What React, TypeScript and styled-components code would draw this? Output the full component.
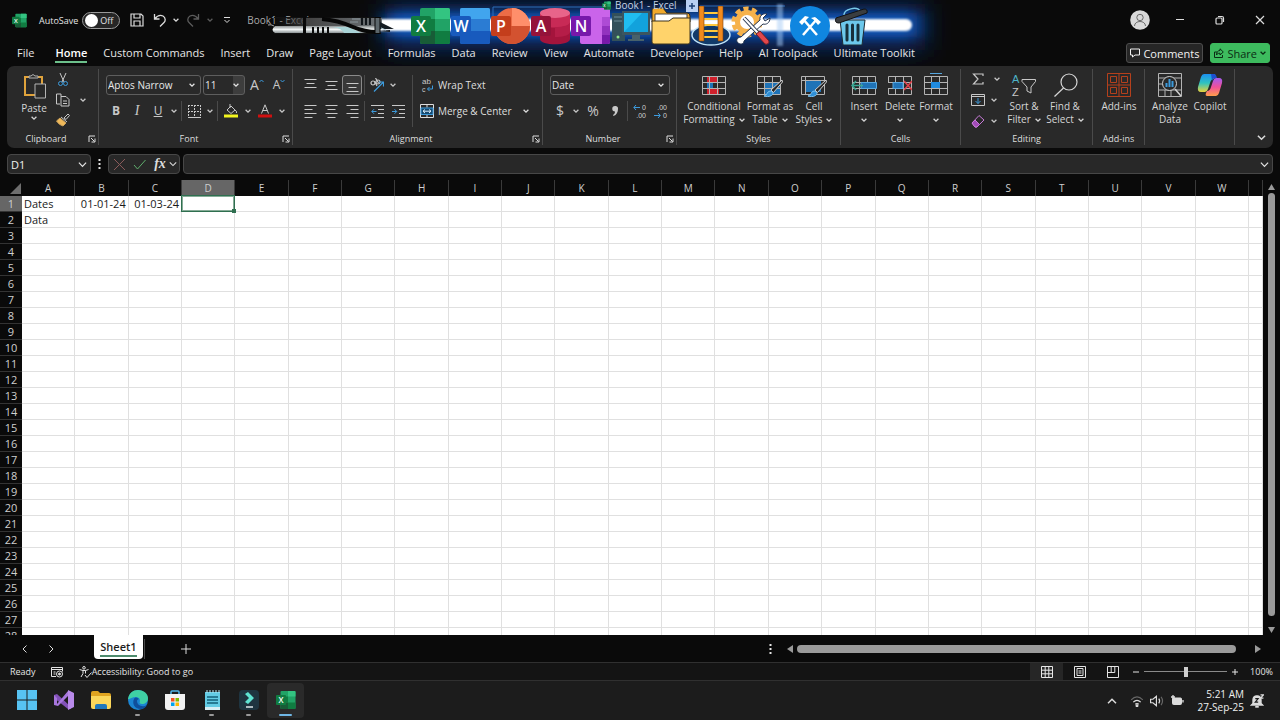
import React from "react";
import styled, { createGlobalStyle, css } from "styled-components";

const Global = createGlobalStyle`
  * { box-sizing: border-box; }
  body {
    margin: 0;
    background: #0a0a0a;
    color: #e4e4e4;
    font-family: "Open Sans", "Noto Sans", sans-serif;
    font-size: 10px;
    overflow: hidden;
  }
  button, input, select { font: inherit; color: inherit; margin: 0; padding: 0; border: 0; background: none; outline: none; }
  svg { display: block; flex: none; }
`;

const Page = styled.div`
  display: flex;
  flex-direction: column;
  height: 100vh;
  position: relative;
`;

/* ---------- title bar ---------- */
const TitleBar = styled.header`
  display: flex;
  align-items: center;
  flex: none;
  height: 40px;
  padding-left: 12px;
`;
const AutoSave = styled.label`
  display: flex;
  align-items: center;
  gap: 4px;
  margin-left: 12px;
  font-size: 9px;
`;
const Switch = styled.span`
  display: grid;
  grid-template-columns: 15px 1fr;
  align-items: center;
  width: 38px;
  height: 17px;
  padding: 0 2px;
  border: 1px solid #9a9a9a;
  border-radius: 9px;
  background: #262626;
  input {
    appearance: none;
    width: 13px;
    height: 13px;
    border-radius: 50%;
    background: #fff;
  }
`;
const IconButton = styled.button<{ $w?: number; $dim?: boolean }>`
  display: flex;
  align-items: center;
  justify-content: center;
  flex: none;
  width: ${(p) => p.$w ?? 20}px;
  height: 20px;
  color: ${(p) => (p.$dim ? "#5c5c5c" : "#dcdcdc")};
`;
const QuickAccess = styled.div`
  display: flex;
  align-items: center;
  margin-left: 6px;
`;
const DocTitle = styled.span`
  margin-left: 8px;
  font-size: 10px;
  color: #a9a9a9;
`;
const WindowControls = styled.div`
  display: flex;
  align-items: center;
  margin-left: auto;
`;

/* ---------- dock floating over the window ---------- */
const Dock = styled.div`
  position: absolute;
  left: 260px;
  top: 0;
  width: 704px;
  height: 66px;
`;
const DockArt = styled.svg`
  position: absolute;
  left: 0;
  top: 0;
`;
const DockItems = styled.div`
  position: relative;
  display: flex;
  align-items: center;
  height: 52px;
  padding-left: 151px;
`;
const DockGap = styled.span`
  width: 19px;
`;
const DockHint = styled.div`
  position: absolute;
  left: 342px;
  top: 0;
  display: flex;
  align-items: center;
  gap: 4px;
  height: 11px;
  font-size: 10px;
  line-height: 11px;
  color: #c4d2e6;
`;
const HintPlus = styled.button`
  width: 12px;
  height: 12px;
  margin-left: 5px;
  display: grid;
  place-items: center;
  background: #b9d0f3;
  color: #1d3f74;
`;

/* ---------- tab strip ---------- */
const TabRow = styled.nav`
  position: relative;
  display: flex;
  align-items: center;
  flex: none;
  gap: 16px;
  height: 26px;
  padding: 0 10px 0 17px;
`;
const Tab = styled.button<{ $active?: boolean }>`
  height: 20px;
  padding-top: 2px;
  font-size: 11px;
  line-height: 16px;
  white-space: nowrap;
  color: ${(p) => (p.$active ? "#fff" : "#e6e6e6")};
  font-weight: ${(p) => (p.$active ? 600 : 400)};
  border-bottom: 2px solid ${(p) => (p.$active ? "#6cc08b" : "transparent")};
  &:first-child { margin-right: 5px; }
`;
const TabActions = styled.div`
  display: flex;
  gap: 7px;
  margin-left: auto;
`;
const ActionButton = styled.button<{ $primary?: boolean }>`
  display: flex;
  align-items: center;
  gap: 3px;
  height: 20px;
  padding: 0 3px;
  border-radius: 3px;
  font-size: 11px;
  white-space: nowrap;
  border: 1px solid ${(p) => (p.$primary ? "#3dbb5e" : "#4d4d4d")};
  background: ${(p) => (p.$primary ? "#3dbb5e" : "#262626")};
  color: ${(p) => (p.$primary ? "#0b2c14" : "#f2f2f2")};
`;

/* ---------- ribbon ---------- */
const Ribbon = styled.section`
  display: flex;
  height: 82px;
  flex: none;
  margin: 0 7px;
  border-radius: 7px;
  background: #292929;
`;
const Group = styled.div<{ $w: number; $pad?: number }>`
  display: flex;
  flex-direction: column;
  flex: none;
  width: ${(p) => p.$w}px;
  margin: 3px 0;
  padding-left: ${(p) => p.$pad ?? 7}px;
  border-right: 1px solid #4a4a4a;
`;
const GroupBody = styled.div`
  display: flex;
  flex: 1;
`;
const GroupFoot = styled.div<{ $pad?: number }>`
  display: flex;
  align-items: center;
  height: 12px;
  margin-left: -${(p) => p.$pad ?? 7}px;
  font-size: 9px;
  line-height: 12px;
  color: #dedede;
  span { flex: 1; text-align: center; }
  button { display: grid; place-items: center; width: 13px; }
`;
const Stack = styled.div<{ $gap?: number; $top?: number; $grow?: boolean }>`
  display: flex;
  flex-direction: column;
  gap: ${(p) => p.$gap ?? 6}px;
  padding-top: ${(p) => p.$top ?? 6}px;
  ${(p) => p.$grow && "flex: 1;"}
`;
const Row = styled.div<{ $gap?: number }>`
  display: flex;
  align-items: center;
  gap: ${(p) => p.$gap ?? 1}px;
`;
const Tool = styled.button<{ $w?: number; $on?: boolean; $h?: number }>`
  display: flex;
  align-items: center;
  justify-content: center;
  flex: none;
  width: ${(p) => p.$w ?? 20}px;
  height: ${(p) => p.$h ?? 20}px;
  color: #c8c8c8;
  border-radius: 3px;
  ${(p) =>
    p.$on &&
    css`
      border: 1px solid #8a8a8a;
      background: #383838;
    `}
`;
const Glyph = styled.span<{ $bold?: boolean; $italic?: boolean; $line?: boolean; $size?: number }>`
  font-size: ${(p) => p.$size ?? 12}px;
  line-height: 16px;
  font-weight: ${(p) => (p.$bold ? 700 : 400)};
  font-style: ${(p) => (p.$italic ? "italic" : "normal")};
  font-family: ${(p) => (p.$italic ? '"Liberation Serif", serif' : "inherit")};
  text-decoration: ${(p) => (p.$line ? "underline" : "none")};
`;
const Rule = styled.span`
  flex: none;
  width: 1px;
  height: 20px;
  margin: 0 1px;
  background: #4a4a4a;
`;
const TallRule = styled.span`
  width: 1px;
  height: 52px;
  margin: 6px 7px 0 4px;
  background: #4a4a4a;
`;
const SelectBox = styled.div<{ $w: number; $shade?: boolean }>`
  display: grid;
  grid-template-columns: 1fr 11px;
  align-items: center;
  width: ${(p) => p.$w}px;
  height: 20px;
  border: 1px solid #5e5e5e;
  border-radius: 3px;
  background: ${(p) =>
    p.$shade ? "linear-gradient(to left, #3d3d3d 11px, #292929 11px)" : "#292929"};
  select {
    grid-area: 1 / 1 / 2 / 3;
    appearance: none;
    width: 100%;
    padding-left: 1px;
    font-size: 10px;
    line-height: 16px;
    color: #e8e8e8;
  }
  svg { grid-area: 1 / 2; pointer-events: none; }
`;
const WideTool = styled.button`
  display: flex;
  align-items: center;
  gap: 4px;
  width: 100%;
  height: 20px;
  padding-right: 13px;
  font-size: 10px;
  white-space: nowrap;
  color: #dedede;
  svg:last-child:not(:first-child) { margin-left: auto; }
`;
const Big = styled.button<{ $w: number }>`
  display: flex;
  flex-direction: column;
  align-items: center;
  flex: none;
  width: ${(p) => p.$w}px;
  padding-top: 4px;
  font-size: 10px;
  line-height: 13px;
  white-space: nowrap;
  color: #d6d6d6;
  span { display: flex; align-items: center; gap: 4px; min-height: 13px; }
  svg + span { margin-top: 3px; }
`;
const RibbonEnd = styled.div`
  display: flex;
  flex: 1;
  align-items: flex-end;
  justify-content: flex-end;
  padding: 0 2px 1px 0;
`;

/* ---------- formula bar ---------- */
const FormulaRow = styled.div`
  display: flex;
  align-items: center;
  flex: none;
  height: 32px;
  padding: 0 7px;
`;
const Field = styled.div<{ $w?: number }>`
  display: flex;
  align-items: center;
  height: 20px;
  ${(p) => (p.$w ? `width: ${p.$w}px;` : "flex: 1; margin-left: 3px;")}
  padding: 0 3px;
  border: 1px solid #474747;
  border-radius: 4px;
  background: #282828;
  input { flex: 1; min-width: 0; font-size: 11px; color: #f0f0f0; }
`;
const Grip = styled.span`
  width: 17px;
  display: flex;
  justify-content: center;
`;

/* ---------- grid ---------- */
const SheetArea = styled.main`
  display: flex;
  flex: 1;
  min-height: 0;
`;
const SheetClip = styled.div`
  flex: 1;
  overflow: hidden;
`;
const Sheet = styled.table`
  table-layout: fixed;
  width: 100%;
  border-collapse: separate;
  border-spacing: 0;
`;
const ColW = styled.col<{ $w: number }>`
  width: ${(p) => p.$w}px;
`;
const ColHead = styled.th<{ $on?: boolean }>`
  height: 16px;
  padding: 0;
  font-size: 10px;
  line-height: 14px;
  font-weight: 400;
  border-right: 1px solid #3a3a3a;
  color: #d0d0d0;
  background: ${(p) => (p.$on ? "#666" : "#0a0a0a")};
`;
const RowHead = styled.th<{ $on?: boolean }>`
  height: 16px;
  padding: 0;
  font-size: 11px;
  line-height: 15px;
  font-weight: 400;
  border-bottom: 1px solid #333;
  color: #d0d0d0;
  background: ${(p) => (p.$on ? "#666" : "#0a0a0a")};
`;
const Corner = styled.th`
  padding: 0;
  svg { margin-left: 9px; }
`;
const Cell = styled.td<{ $right?: boolean; $sel?: boolean }>`
  position: relative;
  height: 16px;
  padding: 0 2px;
  font-size: 11px;
  line-height: 15px;
  color: #1a1a1a;
  background: #fff;
  white-space: nowrap;
  text-align: ${(p) => (p.$right ? "right" : "left")};
  border-right: 1px solid #e0e0e0;
  border-bottom: 1px solid #e0e0e0;
  ${(p) =>
    p.$sel &&
    css`
      z-index: 1;
      &::before {
        content: "";
        position: absolute;
        inset: -1px;
        border: 1px solid #2f6f50;
        outline: 1px solid #86ab97;
        outline-offset: -2px;
      }
      &::after {
        content: "";
        position: absolute;
        right: -2px;
        bottom: -2px;
        width: 4px;
        height: 4px;
        background: #2f6f50;
      }
    `}
`;
const VScroll = styled.div`
  display: flex;
  flex-direction: column;
  align-items: center;
  justify-content: space-between;
  width: 17px;
  padding: 4px 0 1px;
`;
const VThumb = styled.div`
  flex: 1;
  width: 7px;
  margin: 2px 0 11px;
  border-radius: 4px;
  background: #9a9a9a;
`;

/* ---------- sheet tabs ---------- */
const SheetBar = styled.div`
  display: flex;
  align-items: center;
  flex: none;
  height: 27px;
  padding: 0 19px 0 14px;
`;
const SheetTab = styled.button`
  align-self: flex-start;
  height: 24px;
  width: 49px;
  margin-left: 26px;
  border-radius: 0 0 4px 4px;
  background: #fff;
  color: #1c1c1c;
  font-size: 11px;
  font-weight: 600;
  line-height: 17px;
  span { display: inline-block; border-bottom: 2px solid #4c8a6c; height: 19px; }
`;
const BarFill = styled.div`
  flex: 1;
`;
const HScroll = styled.div`
  display: flex;
  align-items: center;
  gap: 4px;
  width: 38%;
  margin-left: 15px;
`;
const HThumb = styled.div`
  flex: 1;
  height: 8px;
  margin-right: 15px;
  border-radius: 4px;
  background: #9a9a9a;
`;

/* ---------- status bar ---------- */
const StatusBar = styled.footer`
  display: flex;
  align-items: center;
  flex: none;
  height: 19px;
  padding: 0 7px 0 10px;
  font-size: 9px;
  background: #141414;
  border-top: 1px solid #303030;
  border-bottom: 1px solid #303030;
`;
const StatusItem = styled.button`
  display: flex;
  align-items: center;
  margin-left: 15px;
`;
const Views = styled.div`
  display: flex;
  margin-left: auto;
`;
const ViewButton = styled.button<{ $on?: boolean }>`
  display: grid;
  place-items: center;
  width: 33px;
  height: 17px;
  background: ${(p) => (p.$on ? "#262626" : "none")};
`;
const Zoom = styled.label`
  display: flex;
  align-items: center;
  gap: 5px;
  margin-left: 4px;
  input {
    appearance: none;
    width: 83px;
    height: 10px;
    background: linear-gradient(#8a8a8a, #8a8a8a) center / 100% 1px no-repeat;
  }
  input::-webkit-slider-thumb {
    appearance: none;
    width: 4px;
    height: 10px;
    background: #cfcfcf;
  }
  span { margin-left: 7px; }
`;

/* ---------- taskbar ---------- */
const Taskbar = styled.nav`
  display: flex;
  align-items: center;
  flex: none;
  height: 39px;
  padding: 0 16px 0 8px;
  background: #1c1c1c;
`;
const TaskButton = styled.button<{ $mark?: "idle" | "active" }>`
  display: flex;
  flex-direction: column;
  align-items: center;
  width: 37px;
  height: 35px;
  padding-top: 7px;
  border-radius: 4px;
  background: ${(p) => (p.$mark === "active" ? "#2a2a2a" : "none")};
  &::after {
    content: "";
    width: ${(p) => (p.$mark === "active" ? 13 : 5)}px;
    height: 2px;
    margin-top: 4px;
    border-radius: 1px;
    background: ${(p) => (p.$mark === "active" ? "#6fb7e6" : p.$mark ? "#999" : "transparent")};
  }
`;
const Tray = styled.div`
  display: flex;
  align-items: center;
  margin-left: auto;
`;
const Clock = styled.time`
  margin: 0 6px 0 9px;
  text-align: right;
  font-size: 10px;
  line-height: 13px;
  color: #f0f0f0;
`;

/* ---------- icons ---------- */
const Chev = ({ s = 6, up = false, w = 1.3 }: { s?: number; up?: boolean; w?: number }) => (
  <svg width={s} height={s} viewBox="0 0 6 6" fill="none" stroke="currentColor" strokeWidth={w}>
    <path d={up ? "M.6 4.4 3 2l2.4 2.4" : "M.6 1.8 3 4.2l2.4-2.4"} />
  </svg>
);
type IcoProps = { s?: number; h?: number; w?: number; box?: string; children: React.ReactNode };
const Ico = ({ s = 16, h, w = 1, box, children }: IcoProps) => (
  <svg width={s} height={h ?? s} viewBox={box ?? `0 0 ${s} ${h ?? s}`} fill="none" stroke="currentColor" strokeWidth={w}>
    {children}
  </svg>
);
const Launcher = () => (
  <button aria-label="More settings">
    <Ico s={8}>
      <path d="M1 7V1h6M3 3l3.500 3.500M7 3.500V7H3.500" />
    </Ico>
  </button>
);
const MarkText = styled.text`
  font-family: "Liberation Sans", sans-serif;
`;
const ExcelLogo = ({ s }: { s: number }) => (
  <svg width={s} height={s} viewBox="0 0 40 40">
    <rect x="9" y="2" width="30" height="36" rx="2" fill="#21a366" />
    <path d="M24 2h13a2 2 0 0 1 2 2v9H24z" fill="#33c481" />
    <path d="M9 13h15v12H9zM24 25h15v11a2 2 0 0 1-2 2H24z" fill="#107c41" />
    <path d="M9 25h15v13H11a2 2 0 0 1-2-2z" fill="#185c37" />
    <rect x="0" y="10" width="20" height="20" rx="2" fill="#107c41" />
    <text x="10" y="26" textAnchor="middle" fontSize="16" fontWeight="600" fill="#fff">X</text>
  </svg>
);
const Badge = ({ c, t }: { c: string; t: string }) => (
  <>
    <rect x="0" y="10" width="20" height="20" rx="2" fill={c} />
    <text x="10" y="26" textAnchor="middle" fontSize="16" fontWeight="600" fill="#fff">{t}</text>
  </>
);
const D = ({ children }: { children: React.ReactNode }) => (
  <svg width="40" height="40" viewBox="0 0 40 40">{children}</svg>
);
const Lines = ({ y, widths, align = "l" }: { y: number[]; widths: number[]; align?: "l" | "c" | "r" }) => (
  <Ico s={13}>
    {y.map((v, i) => {
      const x = align === "l" ? 0.5 : align === "c" ? (13 - widths[i]) / 2 : 12.5 - widths[i];
      return <path key={v} d={`M${x} ${v}h${widths[i]}`} />;
    })}
  </Ico>
);
const TableGrid = () => <path d="M.5 3.500h23v18H.5zM.5 9.500h23M.5 15.500h23M7.500 3.500v18M15.500 3.500v18" stroke="#b4b4b4" />;
const Brush = () => (
  <>
    <path d="M25 7 14 17l2.500 2.500L25.500 9z" fill="#292929" stroke="#d0d0d0" />
    <path d="M7 23c3 0 3-5 6-5s4 3 1.500 4.500S9 24 7 23z" fill="#2f8fd6" stroke="#7fc2ee" />
  </>
);

const dockItems: [string, React.ReactNode][] = [
  ["Excel", <ExcelLogo s={40} />],
  ["Word", (
    <D>
      <rect x="9" y="2" width="30" height="36" rx="2" fill="#2b7cd3" />
      <path d="M9 13V4a2 2 0 0 1 2-2h26a2 2 0 0 1 2 2v9z" fill="#41a5ee" />
      <path d="M9 25h30v11a2 2 0 0 1-2 2H11a2 2 0 0 1-2-2z" fill="#185abd" />
      <Badge c="#185abd" t="W" />
    </D>
  )],
  ["PowerPoint", (
    <D>
      <circle cx="21" cy="20" r="18" fill="#ed6c47" />
      <path d="M21 2a18 18 0 0 1 18 18H21z" fill="#ff8f6b" />
      <path d="M3 20h36a18 18 0 0 1-36 0z" fill="#d35230" />
      <Badge c="#c43e1c" t="P" />
    </D>
  )],
  ["Access", (
    <D>
      <path d="M9 7v26c0 7 30 7 30 0V7z" fill="#a4143c" />
      <path d="M9 7v10c0 6 30 6 30 0V7z" fill="#c82a56" />
      <path d="M24 21c8 0 15-2 15-5v10c0 3-7 5-15 5z" fill="#b51d48" />
      <ellipse cx="24" cy="7" rx="15" ry="5" fill="#e8648a" />
      <Badge c="#94133a" t="A" />
    </D>
  )],
  ["OneNote", (
    <D>
      <rect x="9" y="2" width="30" height="36" rx="2" fill="#ca64ea" />
      <path d="M31 11h8v9h-8z" fill="#ae4bd5" />
      <path d="M31 20h8v9h-8z" fill="#9332bf" />
      <path d="M31 29h8v7a2 2 0 0 1-2 2h-6z" fill="#7719aa" />
      <Badge c="#7719aa" t="N" />
    </D>
  )],
  ["Computer", (
    <D>
      <path d="M1 7h13v28H1z" fill="#33505a" />
      <path d="M3 11h9M3 15h9" stroke="#6d8b96" />
      <circle cx="7" cy="31" r="1.500" fill="#8fe388" />
      <path d="M11 5h28v24H11z" fill="#3b5560" />
      <path d="M13 7h24v19H13z" fill="#20bdf0" />
      <path d="M13 26 31 7h6v19z" fill="#12a2dc" />
      <path d="M21 29h8v4h4v2H17v-2h4z" fill="#48616b" />
    </D>
  )],
  ["Files", (
    <D>
      <path d="M1 8V4q0-2 2-2h9l4 5h20q3 0 3 3v6H1z" fill="#f0a92c" stroke="#302a1c" />
      <path d="M4 8h32v8H4z" fill="#fff" stroke="#444" />
      <path d="M1 15h17l4-3h17v24q0 2-2 2H3q-2 0-2-2z" fill="#ffd36b" stroke="#3c321c" />
    </D>
  )],
  ["Ladder", (
    <D>
      <ellipse cx="20" cy="29" rx="19" ry="10" fill="#123a6a" stroke="#bfe2f7" strokeWidth="1.500" />
      <path d="M12 7h16M12 13h16M12 19h16M12 25h16M12 31h16" stroke="#ffc93d" strokeWidth="2" />
      <path d="M8 0h5v35H8zM27 0h5v35h-5z" fill="#f08b1e" stroke="#7c3d08" strokeWidth=".6" />
    </D>
  )],
  ["Tools", (
    <D>
      <circle cx="16" cy="16" r="13" stroke="#f6b24b" strokeWidth="5" strokeDasharray="5 3.200" fill="none" />
      <circle cx="16" cy="16" r="9.500" stroke="#f6b24b" strokeWidth="5" fill="#fff" />
      <path d="M7 37c-3-3 0-6 3-6l19-17c-1-5 4-7 7-6l-4 4 2 3 5-3c0 5-4 7-7 6L13 35c0 3-3 4-6 2z" fill="#fff" stroke="#24334c" />
      <path d="m13 12 14 15" stroke="#24334c" strokeWidth="4" />
      <path d="m13 12 14 15" stroke="#fff" strokeWidth="2" />
      <path d="m25 28 4-3 9 10q0 4-4 3z" fill="#e2474b" stroke="#6c1f2a" />
    </D>
  )],
  ["Toolbox", (
    <D>
      <circle cx="20" cy="20" r="20" fill="#0f86e0" />
      <path d="m13 29 14-16M27 29 13 13" stroke="#fff" strokeWidth="2.500" />
      <path d="m9 16 6-6 4 1-2 2-5 6zM31 16l-6-5-4 1 3 2 4 5z" fill="#fff" />
    </D>
  )],
  ["Recycle bin", (
    <D>
      <path d="M10 14h25l-3 25H13z" fill="#6cc8ec" stroke="#1c2a33" />
      <path d="M17 19v15M22.500 19v15M28 19v15" stroke="#17303c" strokeWidth="3" strokeLinecap="round" />
      <path d="M14 9c0-6 13-9 16-4" fill="none" stroke="#79c9e8" strokeWidth="1.500" />
      <path d="m6 12 28-9q4 0 3 4L9 17q-5 0-3-5z" fill="#3a3d40" stroke="#121212" />
    </D>
  )],
];

const tabs = ["File", "Home", "Custom Commands", "Insert", "Draw", "Page Layout", "Formulas", "Data", "Review", "View", "Automate", "Developer", "Help", "AI Toolpack", "Ultimate Toolkit"];
const columns = "ABCDEFGHIJKLMNOPQRSTUVW".split("");
const rowCount = 28;
const values: Record<string, string> = { A1: "Dates", B1: "01-01-24", C1: "01-03-24", A2: "Data" };

const Foot = ({ label, launch, pad }: { label: string; launch?: boolean; pad?: number }) => (
  <GroupFoot $pad={pad}>
    <span>{label}</span>
    {launch && <Launcher />}
  </GroupFoot>
);
const MiniChev = () => (
  <Tool $w={10} aria-label="Options"><Chev /></Tool>
);

const taskIcons: { name: string; mark?: "idle" | "active"; art: React.ReactNode }[] = [
  { name: "Start", art: <path d="M0 0h9.500v9.500H0zM10.500 0H20v9.500h-9.500zM0 10.500h9.500V20H0zM10.500 10.500H20V20h-9.500z" fill="#57c3f2" /> },
  { name: "Visual Studio", art: (
    <>
      <path d="m0 5 3-1 13 12-2 3L0 8z" fill="#8251b8" />
      <path d="M0 15V5l3 3v6l11-13 3 1v17l-3-3V6L4 16z" fill="#a776dd" />
      <path d="m14 0 6 3v14l-6 3z" fill="#b98aea" />
    </>
  ) },
  { name: "File Explorer", art: (
    <>
      <path d="M0 3q0-2 2-2h5l2 2h9q2 0 2 2v5H0z" fill="#e0a420" />
      <path d="M0 6h20v11q0 2-2 2H2q-2 0-2-2z" fill="#fbd75b" />
      <path d="M4 19v-3q0-2 2-2h8q2 0 2 2v3z" fill="#1f78bd" />
    </>
  ) },
  { name: "Edge", mark: "idle", art: (
    <>
      <circle cx="10" cy="10" r="10" fill="#1b84d2" />
      <path d="M0 9C1 3 5 0 10 0c6 0 10 4 10 8 0 4-3 6-6 6-2 0-3-1-2-3 0-3-2-4-4-4-4 0-7 3-8 2z" fill="#3fd0a4" />
      <path d="M6 9c-2 4 0 10 7 10 3 0 5-2 6-4-5 3-10 0-10-4 0-1 1-2 2-2-2-2-4-2-5 0z" fill="#0f4f9c" />
    </>
  ) },
  { name: "Store", art: (
    <>
      <path d="M6 5V2q0-1 1-1h6q1 0 1 1v3" fill="none" stroke="#4fb4e8" strokeWidth="1.500" />
      <path d="M0 4h20v13q0 3-3 3H3q-3 0-3-3z" fill="#f2f2f2" />
      <path d="M6 8h3.500v3.500H6z" fill="#f25022" />
      <path d="M10.500 8H14v3.500h-3.500z" fill="#7fba00" />
      <path d="M6 12.500h3.500V16H6z" fill="#00a4ef" />
      <path d="M10.500 12.500H14V16h-3.500z" fill="#ffb900" />
    </>
  ) },
  { name: "Notepad", mark: "idle", art: (
    <>
      <path d="M3 2h15v18H3z" fill="#63cbe4" />
      <path d="M3 17h15v3H3z" fill="#d7eef4" />
      <path d="M5 0v3M8 0v3M11 0v3M14 0v3M17 0v3" stroke="#b8e8f4" />
      <path d="M5 7h11M5 10h11M5 13h11" stroke="#136078" strokeWidth="1.300" />
    </>
  ) },
  { name: "Filmora", mark: "idle", art: (
    <>
      <rect width="20" height="20" rx="4" fill="#1e3440" />
      <path d="m6 4 3-2 6 6-6 6-3-2 4-4z" fill="#5fe3d2" />
      <path d="M7 17h7" stroke="#dfe9ec" strokeWidth="1.500" />
    </>
  ) },
];

export default function App() {
  return (
    <Page>
      <Global />
      <TitleBar>
        <ExcelLogo s={15} />
        <AutoSave>
          AutoSave
          <Switch><input type="checkbox" />Off</Switch>
        </AutoSave>
        <QuickAccess>
          <IconButton $w={22} aria-label="Save">
            <Ico s={14} w={1.2}><path d="M1 1h10l2 2v10H1zM4 1v4h6V1M4 13V8h6v5" /></Ico>
          </IconButton>
          <IconButton $w={23} aria-label="Undo">
            <Ico s={14} w={1.3}><path d="M1.500 1v5h5M1.800 5.800C4 3 7 1.500 10 3c3 2 2.500 5 1 6.500L7 13.500" /></Ico>
          </IconButton>
          <IconButton $w={9} aria-label="Undo options"><Chev /></IconButton>
          <IconButton $w={26} $dim aria-label="Redo">
            <Ico s={14} w={1.3}><path d="M12.500 1v5h-5M12.200 5.800C10 3 7 1.500 4 3 1 5 1.500 8 3 9.500l4 4" /></Ico>
          </IconButton>
          <IconButton $w={8} $dim aria-label="Redo options"><Chev /></IconButton>
          <IconButton $w={25} aria-label="Customize toolbar">
            <Ico s={8}><path d="M1 1.500h6M1.500 4 4 6.500 6.500 4" /></Ico>
          </IconButton>
        </QuickAccess>
        <DocTitle>Book1 - Excel</DocTitle>
        <WindowControls>
          <IconButton $w={40} aria-label="Account">
            <Ico s={20}>
              <circle cx="10" cy="10" r="9.800" fill="#d9d9d9" stroke="none" />
              <circle cx="10" cy="7.500" r="3.200" stroke="#6a6a6a" />
              <path d="M4.500 16c0-6 11-6 11 0" stroke="#6a6a6a" />
            </Ico>
          </IconButton>
          <IconButton $w={40} aria-label="Minimize"><Ico s={8}><path d="M0 3.500h8" /></Ico></IconButton>
          <IconButton $w={40} aria-label="Restore">
            <Ico s={10} w={1.2}><rect x="1" y="3" width="6" height="6" rx="1" /><path d="M3 1.500h4q1.500 0 1.500 1.500v4" /></Ico>
          </IconButton>
          <IconButton $w={40} aria-label="Close"><Ico s={10} w={1.2}><path d="m1 1 8 8M9 1 1 9" /></Ico></IconButton>
        </WindowControls>
      </TitleBar>

      <Dock>
        <DockArt width="704" height="66" viewBox="0 0 704 66">
          <defs>
            <filter id="wide" x="-20%" y="-100%" width="140%" height="300%"><feGaussianBlur stdDeviation="13 11" /></filter>
            <filter id="near" x="-20%" y="-100%" width="140%" height="300%"><feGaussianBlur stdDeviation="9 5" /></filter>
            <filter id="soft" x="-20%" y="-20%" width="140%" height="140%"><feGaussianBlur stdDeviation="1" /></filter>
            <linearGradient id="barrel" x1="0" x2="1">
              <stop offset="0" stopColor="#1a1a1a" stopOpacity="0" />
              <stop offset=".35" stopColor="#454545" />
              <stop offset="1" stopColor="#6e7478" />
            </linearGradient>
            <linearGradient id="metal" x1="0" x2="0" y1="0" y2="1">
              <stop offset="0" stopColor="#8d9293" />
              <stop offset=".5" stopColor="#f1f5f5" />
              <stop offset="1" stopColor="#8a9193" />
            </linearGradient>
          </defs>
          <rect x="125" y="4" width="540" height="46" fill="#072c66" filter="url(#wide)" />
          <rect x="127" y="13" width="530" height="24" fill="#0d57b8" filter="url(#near)" />
          <path d="M233 20V7h110M440 6h85" stroke="#2c6cba" fill="none" />
          <rect x="112" y="19" width="540" height="12" rx="6" fill="#fff" filter="url(#soft)" />
          <rect x="517" y="4" width="6" height="42" fill="#a9cdf7" opacity=".5" filter="url(#soft)" />
          <path d="M12 18h110v8H12z" fill="url(#barrel)" />
          <path d="M15 26h105v7H15q-5-3 0-7z" fill="url(#metal)" />
          <path d="M8 25q3-1 6 1" stroke="#aaa" fill="none" />
          <path d="M14 17.500h107" stroke="#111" />
          <path d="M14 33.500h107" stroke="#111" />
          <path d="M44.500 17v17" stroke="#0a0a0a" strokeWidth="3" />
          <path d="M53 27v6M58 27v6M63 27v6M68 27v6" stroke="#0a0a0a" strokeWidth="2" />
          <path d="M84 33c-2-4-8-6-13-6h18l12 6z" fill="#a9d3d6" />
          <path d="M62 19c14 1 22 4 31 8 7 3 13 5 24 5" stroke="#070707" strokeWidth="4" fill="none" />
          <path d="M102 18v7M106 18v7M110 18v7" stroke="#10151a" strokeWidth="2" />
          <path d="M92 19h8M90 22h8" stroke="#8b979c" />
          <path d="M115 17.500h5v16h-5z" fill="#5d676c" stroke="#070707" />
          <path d="m120 22 14 7h-14zM120 31l10-1v2z" fill="#141c22" />
          <path d="m121 28 5 2" stroke="#b7d4dc" />
        </DockArt>
        <DockItems>
          {dockItems.map(([name, art]) => (
            <React.Fragment key={name}>
              {name === "Toolbox" && <DockGap />}
              <button aria-label={name}>{art}</button>
            </React.Fragment>
          ))}
        </DockItems>
        <DockHint>
          <ExcelLogo s={9} />
          Book1 - Excel
          <HintPlus aria-label="Add"><Ico s={8} w={1.5}><path d="M4 1v6M1 4h6" /></Ico></HintPlus>
        </DockHint>
      </Dock>

      <TabRow>
        {tabs.map((t) => <Tab key={t} $active={t === "Home"}>{t}</Tab>)}
        <TabActions>
          <ActionButton>
            <Ico s={10}><path d="M.5 1h9v6H5L2.500 9V7h-2z" /></Ico>Comments
          </ActionButton>
          <ActionButton $primary>
            <Ico s={10}><path d="M3 4H.5v5.500h8V7M6 .8 9.300 4 6 7V5.200C4 5.200 3 6 2.500 7c0-3 1.500-4.500 3.500-4.500z" /></Ico>Share<Chev />
          </ActionButton>
        </TabActions>
      </TabRow>

      <Ribbon>
        <Group $w={92}>
          <GroupBody>
            <Big $w={40}>
              <Ico s={24} h={26}>
                <path d="M3 4h17v18H3z" stroke="#e0a33c" strokeWidth="2" />
                <path d="M7 5V3h2q2-3 4 0h3v2z" stroke="#b4b4b4" fill="#292929" />
                <path d="M13 11h10.500v14H13z" stroke="#b4b4b4" fill="#292929" />
              </Ico>
              <span>Paste</span>
              <Chev />
            </Big>
            <Stack $gap={1} $top={0}>
              <Tool $w={18} aria-label="Cut">
                <Ico s={12} h={13}><path d="m3 0 4 9M9 0 5 9" /><circle cx="3.500" cy="10.500" r="2" stroke="#3d9bdc" /><circle cx="8.500" cy="10.500" r="2" stroke="#3d9bdc" /></Ico>
              </Tool>
              <Row $gap={6}>
                <Tool $w={18} aria-label="Copy">
                  <Ico s={14}><path d="M5 3.500V1H.5v10H4" /><path d="M5 3.500h5l3 3V13H5zM7 8h4M7 10.500h4" /></Ico>
                </Tool>
                <MiniChev />
              </Row>
              <Tool $w={18} $h={18} aria-label="Format painter">
                <Ico s={14}><path d="m8 5 4-4 1.500 1.500L10 6.500zM5 4l6 5" /><path d="m4 5 6 5-3 3q-4-1-6.500-5z" fill="#f0b95a" stroke="#caa15a" /></Ico>
              </Tool>
            </Stack>
          </GroupBody>
          <Foot label="Clipboard" launch />
        </Group>

        <Group $w={194}>
          <GroupBody>
            <Stack>
              <Row $gap={2}>
                <SelectBox $w={95}><select aria-label="Font"><option>Aptos Narrow</option></select><Chev /></SelectBox>
                <SelectBox $w={42} $shade><select aria-label="Font size"><option>11</option></select><Chev /></SelectBox>
                <Tool aria-label="Increase font size">
                  <Glyph $size={14}>A</Glyph><Ico s={5} h={12}><path d="M.5 3 2.500 1l2 2" stroke="#3d9bdc" /></Ico>
                </Tool>
                <Tool aria-label="Decrease font size">
                  <Glyph $size={12}>A</Glyph><Ico s={5} h={12}><path d="m.5 1 2 2 2-2" stroke="#3d9bdc" /></Ico>
                </Tool>
              </Row>
              <Row>
                <Tool aria-label="Bold"><Glyph $bold>B</Glyph></Tool>
                <Tool aria-label="Italic"><Glyph $italic $size={14}>I</Glyph></Tool>
                <Tool aria-label="Underline"><Glyph $line>U</Glyph></Tool>
                <MiniChev />
                <Rule />
                <Tool aria-label="Borders"><Ico s={13}><path d="M.5 0v13M6.500 0v13M12.500 0v13M0 .5h13M0 6.500h13" strokeDasharray="2 1" /><path d="M0 12.500h13" /></Ico></Tool>
                <MiniChev />
                <Rule />
                <Tool $w={22} aria-label="Fill color">
                  <Ico s={14}><path d="m3 6 4-4 4 4-4 3.500zM6 0v4M11 6q2 1 1.500 3" /><path d="M0 12h14" stroke="#f3f51f" strokeWidth="3" /></Ico>
                </Tool>
                <MiniChev />
                <Tool $w={22} aria-label="Font color">
                  <Ico s={14}><path d="M3.500 9.500 7 .8l3.500 8.700M4.800 6.500h4.400" /><path d="M0 12h14" stroke="#d01010" strokeWidth="3" /></Ico>
                </Tool>
                <MiniChev />
              </Row>
            </Stack>
          </GroupBody>
          <Foot label="Font" launch />
        </Group>

        <Group $w={250}>
          <GroupBody>
            <Stack>
              <Row>
                <Tool aria-label="Top align"><Lines y={[0.5, 4.5, 8.5]} widths={[12, 8, 12]} align="c" /></Tool>
                <Tool aria-label="Middle align"><Lines y={[2.5, 6.5, 10.5]} widths={[12, 8, 12]} align="c" /></Tool>
                <Tool $on aria-label="Bottom align"><Lines y={[4.5, 8.5, 12.5]} widths={[12, 8, 12]} align="c" /></Tool>
                <Rule />
                <Tool aria-label="Orientation">
                  <Ico s={14} w={1.2}>
                    <circle cx="3" cy="5" r="2" /><circle cx="8" cy="4" r="2" /><path d="M4.500 3 7 8M5.500 0l3 5" />
                    <path d="m4 13.500 9-9M9 4h4.500v4.500" stroke="#3d9bdc" />
                  </Ico>
                </Tool>
                <MiniChev />
              </Row>
              <Row>
                <Tool aria-label="Align left"><Lines y={[0.5, 4.5, 8.5, 12.5]} widths={[12, 8, 12, 8]} /></Tool>
                <Tool aria-label="Center"><Lines y={[0.5, 4.5, 8.5, 12.5]} widths={[12, 8, 12, 8]} align="c" /></Tool>
                <Tool aria-label="Align right"><Lines y={[0.5, 4.5, 8.5, 12.5]} widths={[12, 8, 12, 8]} align="r" /></Tool>
                <Rule />
                <Tool aria-label="Decrease indent">
                  <Ico s={13}><path d="M0 .5h13M7 4.500h6M7 8.500h6M0 12.500h13" /><path d="M5.500 6.500H.8M3 4.200.8 6.500 3 8.800" stroke="#3d9bdc" /></Ico>
                </Tool>
                <Tool aria-label="Increase indent">
                  <Ico s={13}><path d="M0 .5h13M7 4.500h6M7 8.500h6M0 12.500h13" /><path d="M0 6.500h4.700M2.500 4.200l2.200 2.300-2.200 2.300" stroke="#3d9bdc" /></Ico>
                </Tool>
              </Row>
            </Stack>
            <TallRule />
            <Stack $grow>
              <WideTool>
                <svg width="14" height="18" viewBox="0 0 14 18" fill="none" stroke="#3d9bdc">
                  <MarkText x="2" y="8" fontSize="8" fill="#c8c8c8" stroke="none">ab</MarkText>
                  <MarkText x="2" y="16" fontSize="7" fill="#c8c8c8" stroke="none">c</MarkText>
                  <path d="M12.500 9.500v3.500H7.500M9.500 11l-2 2 2 2" />
                </svg>
                Wrap Text
              </WideTool>
              <WideTool>
                <Ico s={14}><path d="M.5.500h13v13H.5zM7 .5v3M7 10.500v3" /><path d="M1 4h12v6.500H1z" fill="#174a70" stroke="#3d9bdc" /><path d="M3 7.200h8M5 5.500 3 7.200 5 9M9 5.500l2 1.700L9 9" stroke="#d8ecfa" /></Ico>
                Merge &amp; Center
                <Chev />
              </WideTool>
            </Stack>
          </GroupBody>
          <Foot label="Alignment" launch />
        </Group>

        <Group $w={134}>
          <GroupBody>
            <Stack>
              <SelectBox $w={120}><select aria-label="Number format"><option>Date</option></select><Chev /></SelectBox>
              <Row>
                <Tool aria-label="Currency"><Glyph $size={14}>$</Glyph></Tool>
                <MiniChev />
                <Tool $w={22} aria-label="Percent"><Glyph $size={14}>%</Glyph></Tool>
                <Tool aria-label="Comma style">
                  <Ico s={8} h={12}><path d="M4 1a2.500 2.500 0 0 1 3 3c0 3-1.500 6-4.500 7l-.5-1c1.500-1 2-2 2-3.500A2.600 2.600 0 0 1 4 1z" fill="currentColor" stroke="none" /></Ico>
                </Tool>
                <Rule />
                {["Increase decimal", "Decrease decimal"].map((n, i) => (
                  <Tool key={n} aria-label={n}>
                    <svg width="14" height="18" viewBox="0 0 14 18" fill="none">
                      <MarkText x="13" y="8" textAnchor="end" fontSize="7" fill="#d0d0d0">{i ? ".00" : "0"}</MarkText>
                      <MarkText x="13" y="16" textAnchor="end" fontSize="7" fill="#d0d0d0">{i ? "0" : ".00"}</MarkText>
                      <path d={i ? "M0 13.500h6M4 11l2.300 2.500L4 16" : "M7 5.500H1M3 3 .8 5.500 3 8"} stroke="#3d9bdc" />
                    </svg>
                  </Tool>
                ))}
              </Row>
            </Stack>
          </GroupBody>
          <Foot label="Number" launch />
        </Group>

        <Group $w={164} $pad={6}>
          <GroupBody>
            <Big $w={62}>
              <Ico s={24}><path d="M5 3h10v6H5zM5 15h12v6H5z" fill="#d0202c" stroke="none" /><path d="M5 9h6v6H5z" fill="#1f73b7" stroke="none" /><TableGrid /></Ico>
              <span>Conditional</span><span>Formatting <Chev /></span>
            </Big>
            <Big $w={50}>
              <Ico s={26} h={24}><path d="M7 9h16v12H7z" fill="#1f73b7" stroke="none" /><TableGrid /><Brush /></Ico>
              <span>Format as</span><span>Table <Chev /></span>
            </Big>
            <Big $w={38}>
              <Ico s={26} h={24}><path d="M.5 3.500h23v18H.5zM.5 7.500h23M4.500 3.500v18" stroke="#b4b4b4" /><path d="M5 8h15v11H5z" fill="#1f73b7" stroke="none" /><Brush /></Ico>
              <span>Cell</span><span>Styles <Chev /></span>
            </Big>
          </GroupBody>
          <Foot label="Styles" pad={6} />
        </Group>

        <Group $w={120} $pad={5}>
          <GroupBody>
            <Big $w={36}>
              <Ico s={26} h={24}><path d="M1.500 3.500h23v18h-23zM1.500 9.500h23M1.500 15.500h23M8.500 3.500v18M16.500 3.500v18" stroke="#b4b4b4" /><path d="M10 9.500h15.500v6H10z" fill="#1f73b7" stroke="#56a7e0" /><path d="M12 12.500H1M5 8l-4 4.500L5 17" stroke="#38a893" strokeWidth="1.500" /></Ico>
              <span>Insert</span><span><Chev /></span>
            </Big>
            <Big $w={36}>
              <Ico s={24}><TableGrid /><path d="M0 10h4v5H0z" fill="#292929" stroke="none" /><path d="M5 9.500h10v6H5z" fill="#1f73b7" stroke="#56a7e0" /><path d="m16 8 8 9M24 8l-8 9" stroke="#e0414b" strokeWidth="1.500" /></Ico>
              <span>Delete</span><span><Chev /></span>
            </Big>
            <Big $w={36}>
              <Ico s={24}><TableGrid /><path d="M7 9h9v6H7z" fill="#1f8be0" stroke="none" /><path d="M6 .5h12" stroke="#56a7e0" /></Ico>
              <span>Format</span><span><Chev /></span>
            </Big>
          </GroupBody>
          <Foot label="Cells" pad={5} />
        </Group>

        <Group $w={132}>
          <GroupBody>
            <Stack $gap={1} $top={0}>
              <Row $gap={4}><Tool aria-label="AutoSum"><Ico s={12} w={1.2}><path d="M11 3V1H1.500L6 6l-4.500 5H11V9" /></Ico></Tool><MiniChev /></Row>
              <Row><Tool aria-label="Fill"><Ico s={14}><path d="M.5 1.500h13v11H.5zM.5 3.500h13" /><path d="M7 5v5.500M4.500 8 7 10.500 9.500 8" stroke="#3d9bdc" /></Ico></Tool><MiniChev /></Row>
              <Row><Tool aria-label="Clear"><Ico s={14}><path d="m1 9 7-7.500L13 6l-7 7H4z" stroke="#c77ad8" /><path d="m1 9 3-3 4.500 4.500L6 13H4z" fill="#a24bb8" stroke="#c77ad8" /></Ico></Tool><MiniChev /></Row>
            </Stack>
            <Big $w={44}>
              <svg width="26" height="24" viewBox="0 0 26 24" fill="none" stroke="#c8c8c8">
                <MarkText x="1" y="10" fontSize="11" fill="#4db3c8" stroke="none">A</MarkText>
                <MarkText x="1" y="23" fontSize="11" fill="#c8c8c8" stroke="none">Z</MarkText>
                <path d="M11 6.500h13.500v2L20 14v6l-4-2v-4l-5-5.500z" />
              </svg>
              <span>Sort &amp;</span><span>Filter <Chev /></span>
            </Big>
            <Big $w={38}>
              <Ico s={26} h={24} w={1.2}><circle cx="17" cy="9" r="8" /><path d="M11.500 15 2.500 23.500" /></Ico>
              <span>Find &amp;</span><span>Select <Chev /></span>
            </Big>
          </GroupBody>
          <Foot label="Editing" />
        </Group>

        <Group $w={52} $pad={1}>
          <GroupBody>
            <Big $w={50}>
              <Ico s={24}><path d="M.5.500h23v23H.5zM12 .5v23M.5 12h23M3.500 3.500h6v6h-6zM14.500 3.500h6v6h-6zM3.500 14.500h6v6h-6zM14.500 14.500h6v6h-6z" stroke="#b5401c" /></Ico>
              <span>Add-ins</span>
            </Big>
          </GroupBody>
          <Foot label="Add-ins" pad={1} />
        </Group>

        <Group $w={90} $pad={5}>
          <GroupBody>
            <Big $w={40}>
              <Ico s={24}>
                <path d="M.5.500h23v23H.5zM.5 5h23M.5 11h6M.5 17h23M7 17v6M13 17v6" stroke="#b4b4b4" />
                <circle cx="11.500" cy="10.500" r="7" fill="#292929" stroke="#d0d0d0" /><path d="m17 16 6 7" stroke="#d0d0d0" strokeWidth="1.500" />
                <path d="M8.500 10v4M11.500 6v8M14.500 8v6" stroke="#3d9bdc" strokeWidth="2" />
              </Ico>
              <span>Analyze</span><span>Data</span>
            </Big>
            <Big $w={40}>
              <svg width="26" height="24" viewBox="0 0 26 24">
                <defs>
                  <linearGradient id="cpA" x1="0" y1="0" x2="0" y2="1"><stop offset="0" stopColor="#1b8ff0" /><stop offset=".5" stopColor="#2fc3c0" /><stop offset="1" stopColor="#e8d23a" /></linearGradient>
                  <linearGradient id="cpB" x1="0" y1="0" x2="0" y2="1"><stop offset="0" stopColor="#a35cf0" /><stop offset=".5" stopColor="#f0509a" /><stop offset="1" stopColor="#ff9d4a" /></linearGradient>
                </defs>
                <path d="M7 1h10q2 0 1 3l-1 2q-3 0-4 4l-2 6q-1 3-3 3H4q-4 0-3-5L4 4q1-3 3-3z" fill="url(#cpA)" />
                <path d="M19 23H10q-2 0-1-3l1-2q3 0 4-4l2-6q1-3 3-3h3q4 0 3 5l-3 10q-1 3-3 3z" fill="url(#cpB)" />
                <path d="M14 1h3q2 0 3 4h-2q-2 0-3 3z" fill="#1c4fd0" />
              </svg>
              <span>Copilot</span>
            </Big>
          </GroupBody>
        </Group>
        <RibbonEnd>
          <IconButton aria-label="Collapse ribbon"><Chev s={9} w={1} /></IconButton>
        </RibbonEnd>
      </Ribbon>

      <FormulaRow>
        <Field $w={84}>
          <input aria-label="Name box" defaultValue="D1" />
          <Chev s={9} w={0.8} />
        </Field>
        <Grip>
          <Ico s={3} h={10}><path d="M1.500 0v10" strokeWidth="2" strokeDasharray="2 2" /></Ico>
        </Grip>
        <Field $w={72}>
          <IconButton $w={14} aria-label="Cancel"><Ico s={11}><path d="m0 0 11 11M11 0 0 11" stroke="#8a5a5a" /></Ico></IconButton>
          <IconButton $w={26} aria-label="Enter"><Ico s={13} h={11}><path d="m1 6 3.500 4L12.500 1" stroke="#5fae6c" /></Ico></IconButton>
          <IconButton $w={16} aria-label="Insert function"><Glyph $italic $bold $size={14}>fx</Glyph></IconButton>
          <IconButton $w={9} aria-label="Function options"><Chev s={8} w={0.8} /></IconButton>
        </Field>
        <Field>
          <input aria-label="Formula bar" />
          <Chev s={9} w={0.8} />
        </Field>
      </FormulaRow>

      <SheetArea>
        <SheetClip>
          <Sheet>
            <colgroup>
              <ColW $w={22} />
              {columns.map((c) => <col key={c} />)}
              <ColW $w={14} />
            </colgroup>
            <thead>
              <tr>
                <Corner><svg width="12" height="12" viewBox="0 0 12 12"><path d="M12 1v11H1z" fill="#6e6e6e" /></svg></Corner>
                {columns.map((c) => <ColHead key={c} $on={c === "D"}>{c}</ColHead>)}
                <ColHead />
              </tr>
            </thead>
            <tbody>
              {Array.from({ length: rowCount }, (_, i) => i + 1).map((r) => (
                <tr key={r}>
                  <RowHead $on={r === 1}>{r}</RowHead>
                  {columns.map((c) => (
                    <Cell key={c} $sel={c === "D" && r === 1} $right={c !== "A"}>{values[c + r]}</Cell>
                  ))}
                  <Cell />
                </tr>
              ))}
            </tbody>
          </Sheet>
        </SheetClip>
        <VScroll>
          <Ico s={7}><path d="M3.500 0 7 6H0z" fill="#9a9a9a" stroke="none" /></Ico>
          <VThumb />
          <Ico s={7}><path d="M3.500 6 7 0H0z" fill="#9a9a9a" stroke="none" /></Ico>
        </VScroll>
      </SheetArea>

      <SheetBar>
        <IconButton aria-label="Previous sheet"><Ico s={5} h={8}><path d="M4.500.5 1 4l3.500 3.500" /></Ico></IconButton>
        <IconButton $w={34} aria-label="Next sheet"><Ico s={5} h={8}><path d="M.5.5 4 4 .5 7.500" /></Ico></IconButton>
        <SheetTab><span>Sheet1</span></SheetTab>
        <Rule />
        <IconButton $w={80} aria-label="New sheet"><Ico s={10}><path d="M5 0v10M0 5h10" /></Ico></IconButton>
        <BarFill />
        <Ico s={3} h={10}><path d="M1.500 0v10" strokeWidth="2" strokeDasharray="2 2" /></Ico>
        <HScroll>
          <Ico s={6} h={8}><path d="M6 0v8L0 4z" fill="#9a9a9a" stroke="none" /></Ico>
          <HThumb />
          <Ico s={6} h={8}><path d="M0 0v8l6-4z" fill="#9a9a9a" stroke="none" /></Ico>
        </HScroll>
      </SheetBar>

      <StatusBar>
        Ready
        <StatusItem aria-label="Record macro">
          <Ico s={13} h={12}><path d="M.5 1.500h11v4M.5 1.500v9H5M.5 3.500h11M2.500 6h2M2.500 8h2" /><circle cx="8.500" cy="8" r="3" /><circle cx="8.500" cy="8" r="1" fill="currentColor" /></Ico>
        </StatusItem>
        <StatusItem>
          <Ico s={13} h={12}><circle cx="5" cy="1.800" r="1.300" /><path d="M.5 3.500 4 4.500v3L2 11M9.500 3.500 6.500 4.500v3M4 4.500h2.500M6 9l2 2.500 4.500-5" /></Ico>
          Accessibility: Good to go
        </StatusItem>
        <Views>
          <ViewButton $on aria-label="Normal view"><Ico s={12}><path d="M.5.500h11v11H.5zM.5 4.200h11M.5 7.800h11M4.200.500v11M7.800.500v11" stroke="#e8e8e8" /></Ico></ViewButton>
          <ViewButton aria-label="Page layout view"><Ico s={12}><path d="M.5.500h11v11H.5zM3 2.500h6v7H3zM4.500 5h3M4.500 7h3" /></Ico></ViewButton>
          <ViewButton aria-label="Page break view"><Ico s={12}><path d="M.5.500h11v11H.5zM4.200.500v6M7.800.500v6M.5 6.500h7.300" /></Ico></ViewButton>
        </Views>
        <Zoom>
          <Ico s={6}><path d="M0 3h6" /></Ico>
          <input type="range" aria-label="Zoom" min="10" max="190" defaultValue="100" />
          <Ico s={6}><path d="M0 3h6M3 0v6" /></Ico>
          <span>100%</span>
        </Zoom>
      </StatusBar>

      <Taskbar>
        {taskIcons.map((t) => (
          <TaskButton key={t.name} $mark={t.mark} aria-label={t.name}>
            <svg width="20" height="20" viewBox="0 0 20 20">{t.art}</svg>
          </TaskButton>
        ))}
        <TaskButton $mark="active" aria-label="Excel"><ExcelLogo s={20} /></TaskButton>
        <Tray>
          <IconButton $w={30} aria-label="Hidden icons"><Chev s={10} up w={0.9} /></IconButton>
          <IconButton $w={20} aria-label="Network">
            <Ico s={14} h={12} box="0 0 12 10"><path d="M1 4q5-5 10 0" stroke="#666" /><path d="M2.800 6q3.200-3 6.400 0M4.500 7.800q1.500-1.200 3 0" /><circle cx="6" cy="9" r=".8" fill="currentColor" /></Ico>
          </IconButton>
          <IconButton $w={19} aria-label="Volume">
            <Ico s={14} h={12} box="0 0 12 10"><path d="M.5 3.500h2L5.500 1v8L2.500 6.500h-2z" /><path d="M7.500 3q1.500 2 0 4" /><path d="M9.500 1.500q2.500 3.500 0 7" stroke="#666" /></Ico>
          </IconButton>
          <IconButton $w={22} aria-label="Battery">
            <Ico s={13} h={11}><rect x="1.500" y="3" width="9" height="6.500" rx="1" fill="currentColor" /><path d="M12 5v2.500M2 0v4M0 2h4" strokeWidth="1.300" /></Ico>
          </IconButton>
          <Clock>5:21 AM<br />27-Sep-25</Clock>
          <IconButton $w={14} aria-label="Notifications">
            <Ico s={14} box="0 0 12 12"><path d="M1 9.500 2.500 8V5q0-3.500 3.500-3.500T9.500 5v3L11 9.500z" fill="currentColor" /><path d="M4.500 11h3" strokeWidth="1.500" /><path d="M4.500 4h2.500l-2.500 3h2.500" stroke="#1c1c1c" /><path d="M9 .8h2.500L9 3.500h2.500" /></Ico>
          </IconButton>
        </Tray>
      </Taskbar>
    </Page>
  );
}
